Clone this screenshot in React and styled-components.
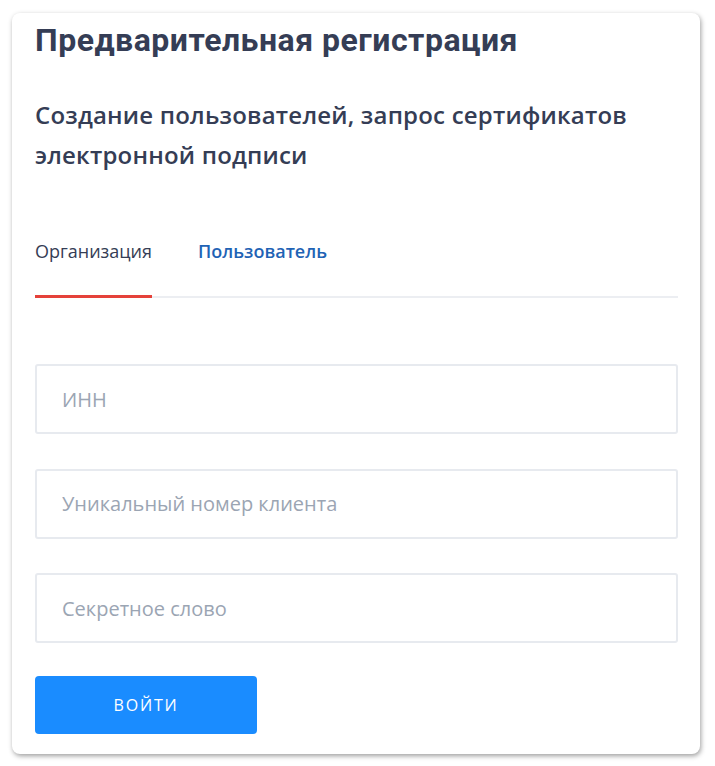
import React from 'react';
import styled, { createGlobalStyle } from 'styled-components';

const Global = createGlobalStyle`
  body {
    margin: 0;
    background: #fff;
    font-family: "Open Sans", "Noto Sans", sans-serif;
  }
`;

const Page = styled.div`
  padding: 13px 15px 12px 12px;
`;

const Card = styled.div`
  box-sizing: border-box;
  width: 688px;
  height: 741px;
  padding: 0 22px 0 23px;
  background: #fff;
  border-radius: 8px;
  box-shadow: 1px 2px 5px rgba(0, 0, 0, 0.38);
  display: flex;
  flex-direction: column;
`;

const Title = styled.h1`
  margin: 7px 0 0;
  font-family: "Roboto", sans-serif;
  font-weight: 700;
  font-size: 32px;
  letter-spacing: 0.5px;
  line-height: 40px;
  color: #353d55;
`;

const Subtitle = styled.p`
  margin: 35px 0 0;
  font-weight: 600;
  font-size: 24px;
  letter-spacing: 0.2px;
  line-height: 40px;
  color: #353d55;
`;

const Tabs = styled.div`
  margin-top: 64px;
  display: flex;
  gap: 46px;
  border-bottom: 2px solid #eceef2;
`;

const Tab = styled.button`
  padding: 0 0 32px;
  border: none;
  background: none;
  font-family: "Open Sans", sans-serif;
  font-size: 18px;
  line-height: 24px;
  font-weight: ${p => (p.$active ? 400 : 600)};
  color: ${p => (p.$active ? '#353d55' : '#1f63b5')};
  margin-bottom: -2px;
  border-bottom: 3px solid ${p => (p.$active ? '#e5413a' : 'transparent')};
`;

const Form = styled.form`
  margin-top: 66px;
  display: flex;
  flex-direction: column;
  gap: 34.5px;
`;

const Input = styled.input`
  box-sizing: border-box;
  width: 100%;
  height: 70px;
  padding: 0 25px;
  border: 2px solid #e7eaef;
  border-radius: 3px;
  font-family: "Open Sans", sans-serif;
  font-size: 20px;
  color: #353d55;
  outline: none;
  &::placeholder {
    color: #9ba5b3;
  }
`;

const Button = styled.button`
  margin-top: -2px;
  width: 222px;
  height: 58px;
  border: none;
  border-radius: 4px;
  background: #1a8cff;
  color: #fff;
  font-family: "Open Sans", sans-serif;
  font-size: 16px;
  font-weight: 500;
  letter-spacing: 1.8px;
`;

export default function App() {
  return (
    <Page>
      <Global />
      <Card>
        <Title>Предварительная регистрация</Title>
        <Subtitle>
          Создание пользователей, запрос сертификатов
          <br />
          электронной подписи
        </Subtitle>
        <Tabs>
          <Tab $active>Организация</Tab>
          <Tab>Пользователь</Tab>
        </Tabs>
        <Form onSubmit={e => e.preventDefault()}>
          <Input placeholder="ИНН" />
          <Input placeholder="Уникальный номер клиента" />
          <Input placeholder="Секретное слово" />
          <Button type="submit">ВОЙТИ</Button>
        </Form>
      </Card>
    </Page>
  );
}
